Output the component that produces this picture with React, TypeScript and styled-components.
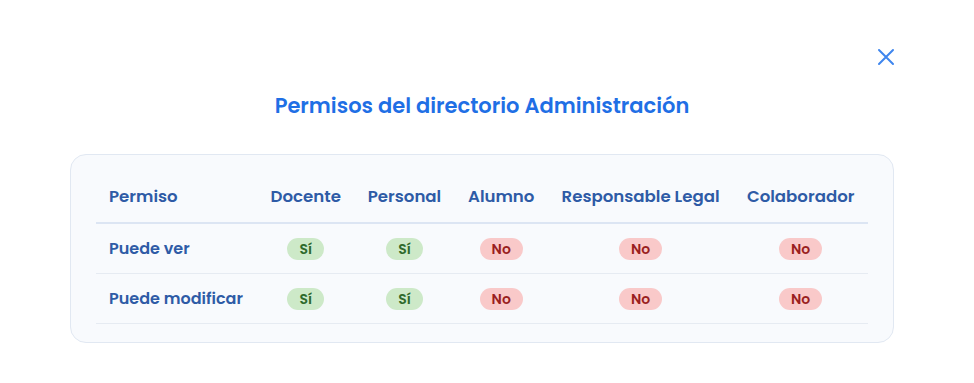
import styled, { createGlobalStyle } from 'styled-components';

const GlobalStyle = createGlobalStyle`
  html, body {
    margin: 0;
    padding: 0;
    background: #ffffff;
  }
  body {
    font-family: "Poppins", "Open Sans", "DejaVu Sans", sans-serif;
  }
`;

type Perm = { label: string; values: boolean[] };

const roles = ['Docente', 'Personal', 'Alumno', 'Responsable Legal', 'Colaborador'];

const perms: Perm[] = [
  { label: 'Puede ver', values: [true, true, false, false, false] },
  { label: 'Puede modificar', values: [true, true, false, false, false] },
];

export default function App() {
  return (
    <>
      <GlobalStyle />
      <Modal>
        <CloseRow>
          <CloseButton aria-label="Cerrar">
            <svg width="18" height="18" viewBox="0 0 18 18" fill="none">
              <path d="M2 2L16 16M16 2L2 16" stroke="#3f86ee" strokeWidth="2" strokeLinecap="round" />
            </svg>
          </CloseButton>
        </CloseRow>
        <Title>Permisos del directorio Administración</Title>
        <Card>
          <Table>
            <thead>
              <tr>
                <Th $first>Permiso</Th>
                {roles.map((r) => (
                  <Th key={r}>{r}</Th>
                ))}
              </tr>
            </thead>
            <tbody>
              {perms.map((p) => (
                <tr key={p.label}>
                  <Td $first>{p.label}</Td>
                  {p.values.map((v, i) => (
                    <Td key={i}>
                      <Pill $yes={v}>{v ? 'Sí' : 'No'}</Pill>
                    </Td>
                  ))}
                </tr>
              ))}
            </tbody>
          </Table>
        </Card>
      </Modal>
    </>
  );
}

const Modal = styled.div`
  width: 974px;
  height: 383px;
  box-sizing: border-box;
  padding: 46px 80px 0 70px;
  display: flex;
  flex-direction: column;
`;

const CloseRow = styled.div`
  display: flex;
  justify-content: flex-end;
  margin-right: -3px;
  height: 22px;
`;

const CloseButton = styled.button`
  border: none;
  background: none;
  padding: 0;
  width: 22px;
  height: 22px;
  display: flex;
  align-items: center;
  justify-content: center;
  cursor: pointer;
`;

const Title = styled.h2`
  margin: 22px 0 0;
  text-align: center;
  font-size: 21px;
  font-weight: 600;
  color: #1f6fe5;
  line-height: 32px;
`;

const Card = styled.div`
  margin-top: 32px;
  width: 824px;
  box-sizing: border-box;
  background: #f8fafd;
  border: 1px solid #e1e8f2;
  border-radius: 16px;
  padding: 16px 25px 18px 25px;
`;

const Table = styled.table`
  width: 100%;
  border-collapse: collapse;
`;

const Th = styled.th<{ $first?: boolean }>`
  font-size: 16.6px;
  font-weight: 600;
  color: #2e5ba6;
  text-align: ${(p) => (p.$first ? 'left' : 'center')};
  padding: 0 13px;
  height: 51px;
  line-height: 25px;
  border-bottom: 2px solid #dce5f3;
  white-space: nowrap;
`;

const Td = styled.td<{ $first?: boolean }>`
  font-size: 16px;
  font-weight: 600;
  color: #2e5ba6;
  text-align: ${(p) => (p.$first ? 'left' : 'center')};
  padding: 0 13px;
  height: 49px;
  border-bottom: 1px solid #e6ebf2;
  white-space: nowrap;
`;

const Pill = styled.span<{ $yes: boolean }>`
  display: inline-block;
  font-size: 14px;
  font-weight: 600;
  line-height: 22px;
  padding: 0 12px;
  border-radius: 999px;
  background: ${(p) => (p.$yes ? '#cde9c8' : '#f9c9c9')};
  color: ${(p) => (p.$yes ? '#2f6a2c' : '#9a1f1f')};
`;
